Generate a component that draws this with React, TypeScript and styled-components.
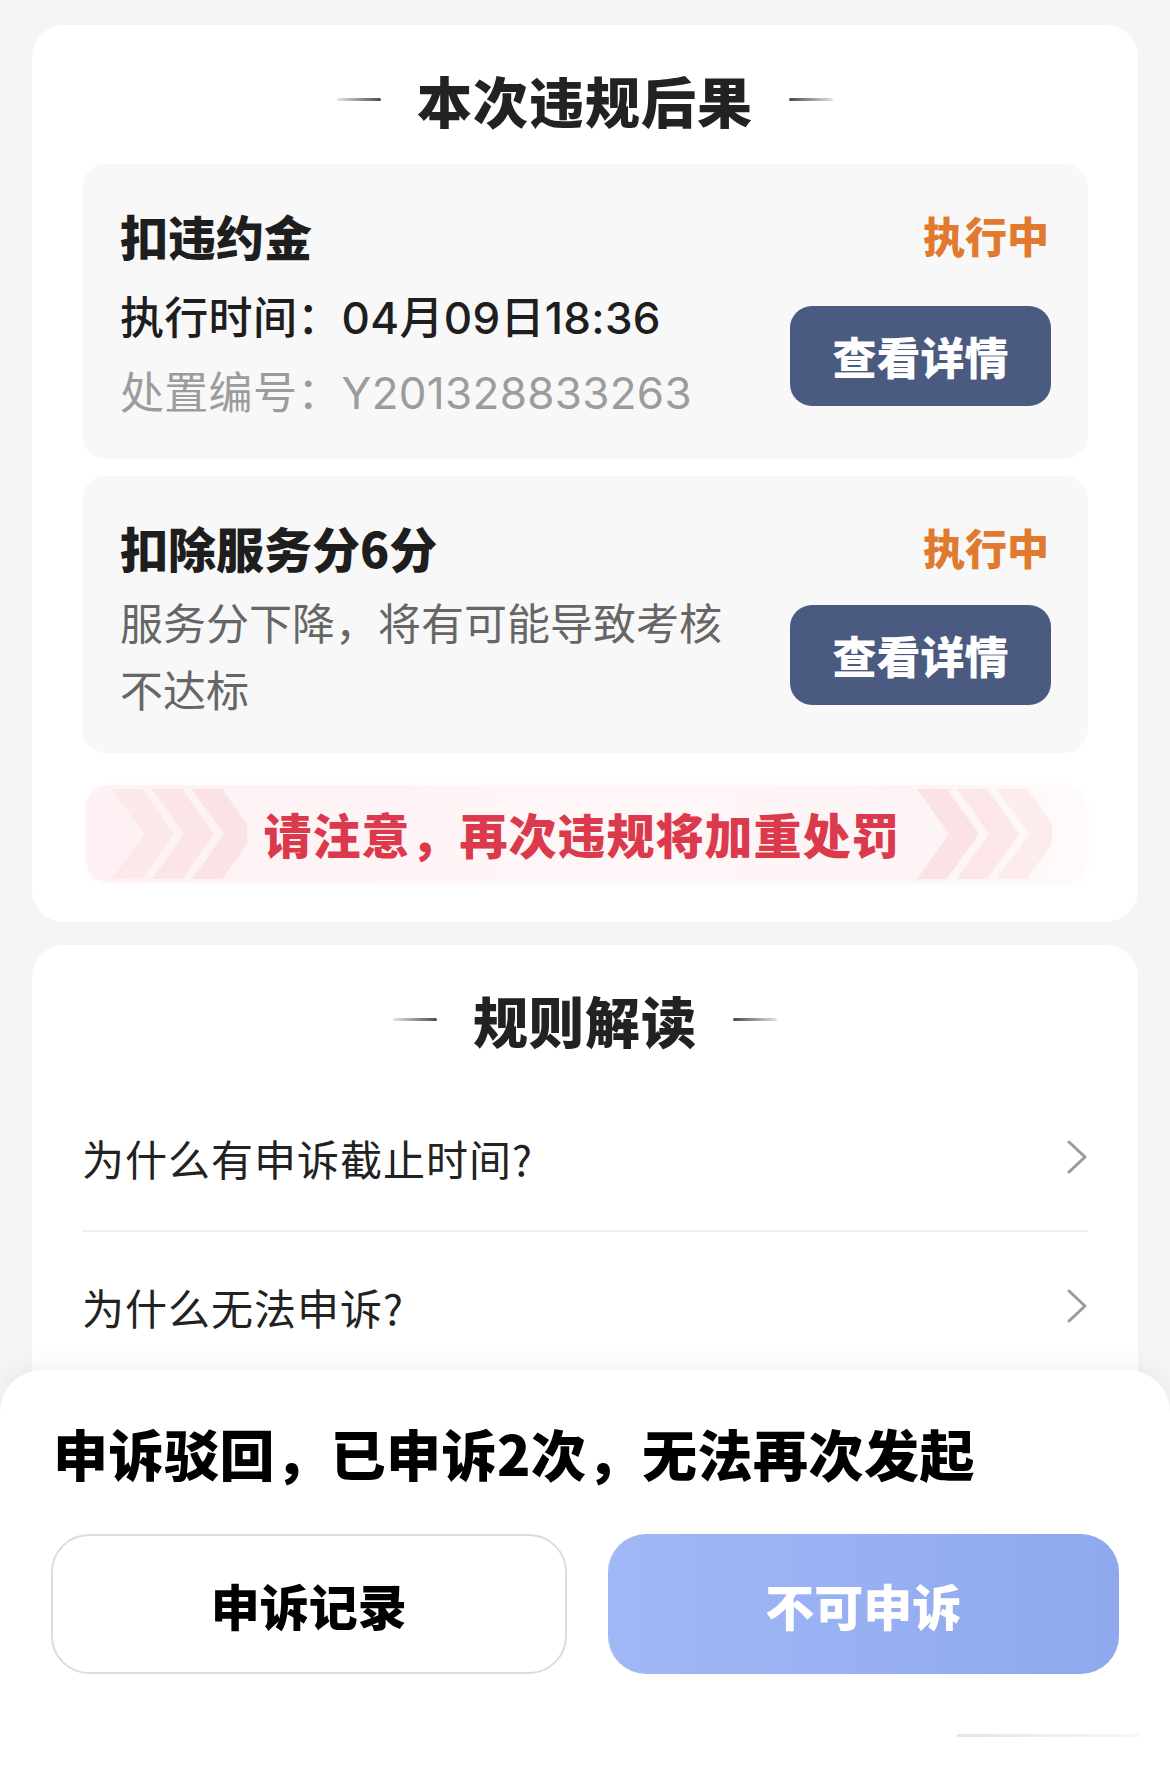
import React from "react";
import styled, { createGlobalStyle } from "styled-components";

const GlobalStyle = createGlobalStyle`
  html, body {
    margin: 0;
    padding: 0;
    background: #f5f5f5;
  }
  body {
    font-family: "Noto Sans CJK SC", "Noto Sans", sans-serif;
    color: #222;
  }
  * { box-sizing: border-box; }
`;

const Screen = styled.div`
  position: relative;
  width: 1170px;
  height: 1776px;
  overflow: hidden;
  background: #f5f5f5;
  padding: 25px 32px 0;
  display: flex;
  flex-direction: column;
  gap: 23px;
`;

const Card = styled.section<{ $pb?: number }>`
  background: #ffffff;
  border-radius: 32px;
  padding: 36px 50px ${(p) => p.$pb ?? 40}px;
  display: flex;
  flex-direction: column;
`;

const SectionHead = styled.div`
  display: flex;
  align-items: center;
  justify-content: center;
  gap: 36px;
  height: 76px;
`;

const Dash = styled.span<{ $flip?: boolean }>`
  width: 44px;
  height: 3px;
  border-radius: 2px;
  background: linear-gradient(
    ${(p) => (p.$flip ? "270deg" : "90deg")},
    rgba(80, 80, 80, 0.15),
    #4a4a4a
  );
`;

const SectionTitle = styled.h2`
  margin: 0;
  font-size: 55px;
  line-height: 76px;
  font-weight: 900;
  letter-spacing: 1px;
  color: #222;
`;

const ItemList = styled.div`
  margin-top: 27px;
  display: flex;
  flex-direction: column;
  gap: 17px;
`;

const Penalty = styled.div<{ $pb: number }>`
  background: #f8f8f8;
  border-radius: 24px;
  padding: 41px 37px ${(p) => p.$pb}px 38px;
  display: flex;
  flex-direction: column;
`;

const PenaltyHead = styled.div`
  display: flex;
  justify-content: space-between;
  align-items: center;
  height: 60px;
`;

const PenaltyTitle = styled.div`
  font-size: 48px;
  line-height: 60px;
  font-weight: 900;
  color: #1e1e1e;
`;

const Status = styled.div`
  font-size: 42px;
  line-height: 60px;
  font-weight: 900;
  color: #e17a2f;
  margin-right: 2px;
`;

const PenaltyBody = styled.div<{ $mt: number }>`
  margin-top: ${(p) => p.$mt}px;
  display: flex;
  align-items: center;
  justify-content: space-between;
`;

const InfoCol = styled.div`
  display: flex;
  flex-direction: column;
  gap: 13px;
`;

const InfoLine = styled.div<{ $muted?: boolean }>`
  font-family: "Inter", "Noto Sans CJK SC", sans-serif;
  font-size: 44px;
  line-height: 62px;
  letter-spacing: 0.3px;
  color: ${(p) => (p.$muted ? "#9c9c9c" : "#1e1e1e")};
  font-weight: ${(p) => (p.$muted ? 400 : 500)};
  white-space: nowrap;
`;

const Desc = styled.div`
  width: 620px;
  font-size: 43px;
  line-height: 67px;
  color: #666;
`;

const DetailButton = styled.button`
  flex: none;
  width: 261px;
  height: 100px;
  border: none;
  border-radius: 22px;
  background: #4b5a80;
  color: #fff;
  font-family: inherit;
  font-size: 44px;
  font-weight: 900;
  padding: 0;
`;

const Warning = styled.div`
  margin: 32px 2px 0 4px;
  height: 97px;
  border-radius: 22px;
  background: linear-gradient(90deg, #fdf1f3 0%, #fff6f7 50%, #fdf4f5 85%, #fffafa 100%);
  box-shadow: 0 2px 6px rgba(240, 200, 205, 0.15);
  display: flex;
  align-items: center;
  justify-content: space-between;
  padding: 0 34px 0 26px;
`;

const WarningText = styled.div`
  font-size: 48px;
  font-weight: 900;
  color: #db3a4d;
  line-height: 97px;
  letter-spacing: 1px;
`;

const Chevrons = styled.svg`
  flex: none;
  width: 135px;
  height: 90px;
`;

const FaqRow = styled.div<{ $last?: boolean }>`
  height: 148px;
  display: flex;
  align-items: center;
  justify-content: space-between;
  border-bottom: ${(p) => (p.$last ? "none" : "2px solid #f0f0f0")};
`;

const FaqText = styled.div`
  font-size: 42px;
  letter-spacing: 1px;
  color: #222;
`;

const Sheet = styled.div`
  position: absolute;
  left: 0;
  right: 0;
  bottom: 0;
  height: 406px;
  background: #fff;
  border-radius: 42px 42px 0 0;
  box-shadow: 0 -6px 24px rgba(0, 0, 0, 0.05);
  padding: 44px 51px 0;
  display: flex;
  flex-direction: column;
`;

const SheetTitle = styled.div`
  font-size: 55px;
  line-height: 76px;
  font-weight: 900;
  letter-spacing: 0.5px;
  color: #000;
  margin-left: 2px;
`;

const SheetActions = styled.div`
  margin-top: 44px;
  display: flex;
  gap: 41px;
`;

const ActionButton = styled.button<{ $primary?: boolean }>`
  flex: 1;
  height: 140px;
  border-radius: 38px;
  font-family: inherit;
  font-size: 49px;
  font-weight: 900;
  padding: 0;
  border: ${(p) => (p.$primary ? "none" : "2px solid #dcdcdc")};
  background: ${(p) =>
    p.$primary ? "linear-gradient(90deg, #a1b7f6 0%, #8fa9ee 100%)" : "#fff"};
  color: ${(p) => (p.$primary ? "#fff" : "#000")};
`;

const HomeBar = styled.div`
  margin: 60px -20px 0 auto;
  width: 182px;
  height: 3px;
  background: linear-gradient(90deg, rgba(0,0,0,0.10), rgba(0,0,0,0.03));
`;

const ChevronGroup: React.FC<{ reverse?: boolean }> = ({ reverse }) => {
  const ops = reverse ? [0.9, 0.7, 0.5] : [0.5, 0.7, 0.9];
  return (
    <Chevrons viewBox="0 0 135 90">
      {[0, 1, 2].map((i) => {
        const o = i * 40;
        return (
          <polygon
            key={i}
            points={`${o},0 ${o + 30},0 ${o + 62},45 ${o + 30},90 ${o},90 ${o + 32},45`}
            fill="#fbe0e4"
            opacity={ops[i]}
          />
        );
      })}
    </Chevrons>
  );
};

const ArrowRight = () => (
  <svg width="22" height="34" viewBox="0 0 22 34">
    <polyline points="3,2 19,17 3,32" fill="none" stroke="#9a9a9a" strokeWidth="3" strokeLinecap="round" strokeLinejoin="round" />
  </svg>
);

export default function App() {
  return (
    <>
      <GlobalStyle />
      <Screen>
        <Card $pb={40}>
          <SectionHead>
            <Dash />
            <SectionTitle>本次违规后果</SectionTitle>
            <Dash $flip />
          </SectionHead>
          <ItemList>
            <Penalty $pb={35}>
              <PenaltyHead>
                <PenaltyTitle>扣违约金</PenaltyTitle>
                <Status>执行中</Status>
              </PenaltyHead>
              <PenaltyBody $mt={22}>
                <InfoCol>
                  <InfoLine>执行时间：04月09日18:36</InfoLine>
                  <InfoLine $muted>处置编号：Y201328833263</InfoLine>
                </InfoCol>
                <DetailButton>查看详情</DetailButton>
              </PenaltyBody>
            </Penalty>
            <Penalty $pb={31}>
              <PenaltyHead>
                <PenaltyTitle>扣除服务分6分</PenaltyTitle>
                <Status>执行中</Status>
              </PenaltyHead>
              <PenaltyBody $mt={11}>
                <Desc>服务分下降，将有可能导致考核不达标</Desc>
                <DetailButton>查看详情</DetailButton>
              </PenaltyBody>
            </Penalty>
          </ItemList>
          <Warning>
            <ChevronGroup />
            <WarningText>请注意，再次违规将加重处罚</WarningText>
            <ChevronGroup reverse />
          </Warning>
        </Card>
        <Card>
          <SectionHead>
            <Dash />
            <SectionTitle>规则解读</SectionTitle>
            <Dash $flip />
          </SectionHead>
          <ItemList>
            <div>
              <FaqRow>
                <FaqText>为什么有申诉截止时间?</FaqText>
                <ArrowRight />
              </FaqRow>
              <FaqRow $last>
                <FaqText>为什么无法申诉?</FaqText>
                <ArrowRight />
              </FaqRow>
            </div>
          </ItemList>
        </Card>
        <Sheet>
          <SheetTitle>申诉驳回，已申诉2次，无法再次发起</SheetTitle>
          <SheetActions>
            <ActionButton>申诉记录</ActionButton>
            <ActionButton $primary>不可申诉</ActionButton>
          </SheetActions>
          <HomeBar />
        </Sheet>
      </Screen>
    </>
  );
}
